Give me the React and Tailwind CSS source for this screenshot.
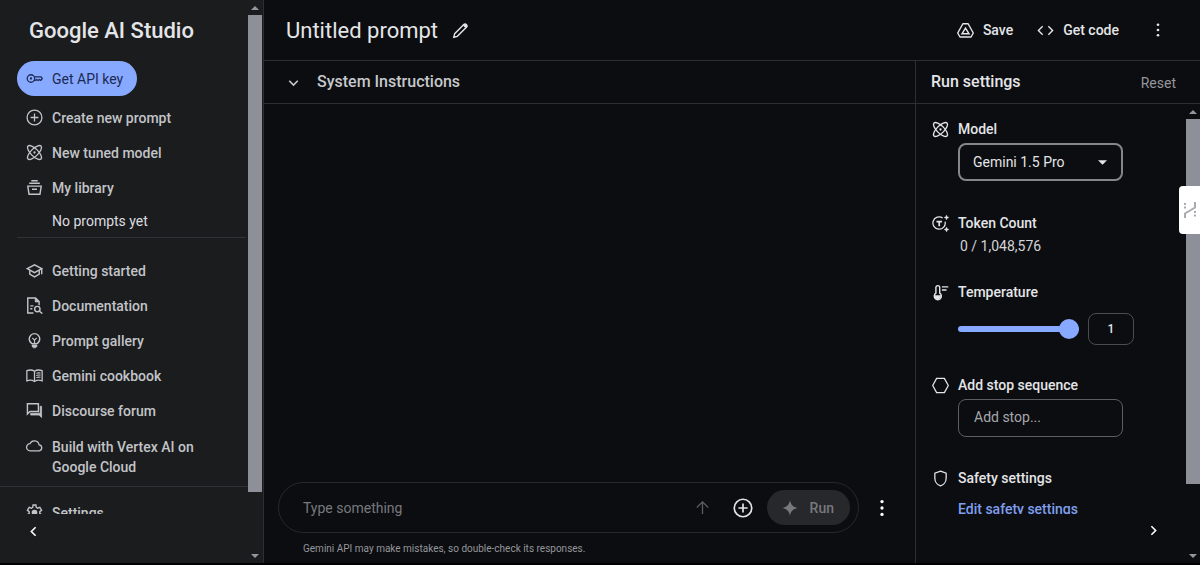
import React, { useState } from "react";

function Icon({ children, className = "size-[17px]", viewBox = "0 0 24 24", strokeWidth = 1.8 }) {
  return (
    <svg
      className={`${className} shrink-0`}
      viewBox={viewBox}
      fill="none"
      stroke="currentColor"
      strokeWidth={strokeWidth}
      aria-hidden="true"
    >
      {children}
    </svg>
  );
}

const KeyIcon = () => (
  <Icon>
    <circle cx="7" cy="12" r="5.3" />
    <circle cx="7" cy="12" r="1.6" fill="currentColor" stroke="none" />
    <path d="M11.8 9.8H21.4L23 12l-2.2 2.6-1.9-1.2-1.8 1.3-1.8-1.3-1.6 1.2h-2.3" />
  </Icon>
);

const PlusCircleIcon = ({ className, strokeWidth }) => (
  <Icon className={className} strokeWidth={strokeWidth}>
    <circle cx="12" cy="12" r="10.5" />
    <path d="M12 6.500v11M6.500 12h11" />
  </Icon>
);

const AtomIcon = () => (
  <Icon strokeWidth={1.900}>
    <ellipse cx="12" cy="12" rx="13" ry="5.200" transform="rotate(45 12 12)" />
    <ellipse cx="12" cy="12" rx="13" ry="5.200" transform="rotate(-45 12 12)" />
    <circle cx="12" cy="12" r="1.600" fill="currentColor" stroke="none" />
  </Icon>
);

const LibraryIcon = () => (
  <Icon strokeWidth={2}>
    <path d="M7.500 2.500h9M4.500 6h15M2.500 10h19l-1.800 11.500H4.300zM8.500 14.500h7" />
  </Icon>
);

const SchoolIcon = () => (
  <Icon strokeWidth={2}>
    <path d="M1.800 9.500 12 4l10.200 5.500L12 15z" />
    <path d="M5.300 11.500v5.700L12 21l6.700-3.800v-5.700M22.200 9.500v7.800" />
  </Icon>
);

const DocSearchIcon = () => (
  <Icon strokeWidth={2}>
    <path d="M10.500 22.500H2.500V1.500h11l5 5v5" />
    <path d="M13 1.500V7h5.500z" fill="currentColor" strokeWidth="1" />
    <path d="M6 12.500h4.500M6 16.500h3" />
    <circle cx="16" cy="17" r="3.800" />
    <path d="m18.700 19.700 4.300 3.800" />
  </Icon>
);

const BulbIcon = () => (
  <Icon strokeWidth={2}>
    <path d="M8.500 16.500c-2.300-1.300-3.900-3.600-3.900-6.800a7.400 7.400 0 0 1 14.800 0c0 3.200-1.600 5.500-3.900 6.800z" />
    <path d="M12 16v-4.500L9 8.500M12 11.500l3-3" strokeWidth="1.600" />
    <path d="M8.500 18.500h7v1.800l-2 2h-3l-2-2z" fill="currentColor" strokeWidth="1" />
  </Icon>
);

const BookIcon = () => (
  <Icon>
    <path d="M12 6C9 4 4.500 4 1.200 5.200v14.300C4.500 18.300 9 18.500 12 20.500c3-2 7.500-2.200 10.800-1V5.200C19.500 4 15 4 12 6z" />
    <path d="M12 6v14.500" />
    <path d="M14.500 9c2-.9 4-.9 6-.5M14.500 12c2-.9 4-.9 6-.5M14.500 15c2-.9 4-.9 6-.5" strokeWidth="1.500" />
  </Icon>
);

const ForumIcon = () => (
  <Icon strokeWidth={2}>
    <path d="M2 2.500h15.500v11H5.500L2 17z" />
    <path d="M22 6v16L18.500 18.500H6.500v-2.500H20V6z" fill="currentColor" strokeWidth="1" />
  </Icon>
);

const CloudIcon = () => (
  <Icon>
    <path d="M6 19.500a5 5 0 0 1-.4-10A6.700 6.700 0 0 1 18.400 11a4.300 4.300 0 0 1 .3 8.500z" />
  </Icon>
);

const GearIcon = () => (
  <Icon strokeWidth={2}>
    <path d="m10 1.500-.5 3.300-2 1.200-3-1.200-2.500 4 2.500 2v2.400l-2.500 2 2.500 4 3-1.200 2 1.200.5 3.300h4l.5-3.300 2-1.200 3 1.200 2.500-4-2.500-2v-2.400l2.500-2-2.500-4-3 1.200-2-1.200-.5-3.300z" />
    <circle cx="12" cy="12" r="4" fill="currentColor" stroke="none" />
  </Icon>
);

const ChevronIcon = ({ d }) => (
  <Icon strokeWidth={2.300}>
    <path d={d} />
  </Icon>
);

const PencilIcon = () => (
  <Icon strokeWidth={1.900}>
    <path d="m2.500 21.500 1.300-5L17 3.300c.9-.9 2-.9 2.800 0l.9.900c.9.900.9 1.900 0 2.800L7.500 20.200z" />
    <path d="m15.500 5 3-3 3.500 3.500-3 3z" fill="currentColor" stroke="none" />
  </Icon>
);

const DriveIcon = () => (
  <Icon strokeWidth={2}>
    <path d="M8.300 2.500h7.400L23 15.500l-3.200 5.700H4.200L1 15.500z" strokeLinejoin="round" />
    <path d="M12 8.500 7 16.700h10z" />
  </Icon>
);

const CodeIcon = () => (
  <Icon strokeWidth={2}>
    <path d="M8 6 2 12l6 6M16 6l6 6-6 6" />
  </Icon>
);

const MoreIcon = ({ className = "size-[18px]" }) => (
  <Icon className={className}>
    <g fill="currentColor" stroke="none">
      <circle cx="12" cy="5" r="1.800" />
      <circle cx="12" cy="12" r="1.800" />
      <circle cx="12" cy="19" r="1.800" />
    </g>
  </Icon>
);

const TokenIcon = () => (
  <Icon viewBox="0 0 24 24" strokeWidth={1.800}>
    <path d="M15 4.200A8.700 8.700 0 1 0 18.500 9.500" />
    <path d="M6.300 9.300h7.800M10.200 9.300v6.700" strokeWidth="2.400" />
    <path d="m20.500 0 1 2.500 2.500 1-2.500 1-1 2.500-1-2.500-2.500-1 2.500-1zM20.500 17l1 2.500 2.500 1-2.500 1-1 2.500-1-2.500-2.500-1 2.500-1z" fill="currentColor" strokeWidth="0.500" />
  </Icon>
);

const ThermometerIcon = () => (
  <Icon strokeWidth={2}>
    <path d="M5.500 13V5a2.700 2.700 0 0 1 5.400 0v8a5 5 0 1 1-5.400 0z" />
    <path d="M3.600 16h9.200a5 5 0 0 1-9.200 3z" fill="currentColor" stroke="none" />
    <path d="M14 4h9M14 8.500h6.500" />
  </Icon>
);

const HexagonIcon = () => (
  <Icon>
    <path d="M6.500 2h11L23 12l-5.500 10h-11L1 12z" />
  </Icon>
);

const ShieldIcon = () => (
  <Icon>
    <path d="m12 1.500 8 3v6.700c0 5-3.300 9.800-8 11.300-4.700-1.500-8-6.300-8-11.300V4.500z" />
  </Icon>
);

function NavLink({ icon, children }) {
  return (
    <a
      href="#"
      className="flex h-[35px] items-center gap-[9px] px-[9px] text-sm font-medium text-[#c2c4c8]"
    >
      {icon}
      {children}
    </a>
  );
}

function Scrollbar({ thumb }) {
  return (
    <div className="flex w-[14px] shrink-0 flex-col items-center" aria-hidden="true">
      <svg className="h-[15px] w-2 shrink-0 text-[#95979f]" viewBox="0 0 8 15" fill="currentColor">
        <path d="M0 10h8L4 6z" />
      </svg>
      <div className="flex w-[14px] flex-1 flex-col">
        <div className={`${thumb} bg-[#8d8f99]`} />
      </div>
      <svg className="h-[15px] w-2 shrink-0 text-[#95979f]" viewBox="0 0 8 15" fill="currentColor">
        <path d="M0 6h8l-4 4z" />
      </svg>
    </div>
  );
}

function Sidebar() {
  return (
    <aside className="flex w-[264px] shrink-0 border-r border-[#2c2e32] bg-[#1b1c1e] pr-px">
      <div className="flex min-w-0 flex-1 flex-col">
        <div className="min-h-0 flex-1 overflow-hidden">
          <h1 className="flex h-[61px] items-center pl-[29px] text-[22px] font-medium text-[#e4e5e8]">
            Google AI Studio
          </h1>
          <nav>
            <div className="pl-[17px]">
              <button className="flex h-[35px] items-center gap-[9px] rounded-full bg-[#87a9ff] pr-3.5 pl-[9px] text-sm text-[#1c2a52]">
                <KeyIcon />
                Get API key
              </button>
              <div className="pt-1">
                <NavLink icon={<PlusCircleIcon />}>Create new prompt</NavLink>
                <NavLink icon={<AtomIcon />}>New tuned model</NavLink>
                <NavLink icon={<LibraryIcon />}>My library</NavLink>
              </div>
              <p className="mr-[2px] border-b border-[#303236] pt-0.5 pb-0.5 pl-[35px] text-sm leading-7 text-[#dcdde0]">
                No prompts yet
              </p>
              <div className="pt-[15px]">
                <NavLink icon={<SchoolIcon />}>Getting started</NavLink>
                <NavLink icon={<DocSearchIcon />}>Documentation</NavLink>
                <NavLink icon={<BulbIcon />}>Prompt gallery</NavLink>
                <NavLink icon={<BookIcon />}>Gemini cookbook</NavLink>
                <NavLink icon={<ForumIcon />}>Discourse forum</NavLink>
                <a
                  href="#"
                  className="flex items-start gap-[9px] px-[9px] pt-[9px] pb-[9px] text-sm leading-5 font-medium text-[#c2c4c8]"
                >
                  <CloudIcon />
                  <span className="max-w-[160px]">Build with Vertex AI on Google Cloud</span>
                </a>
              </div>
            </div>
            <div className="border-t border-[#303236] pt-2 pl-[17px]">
              <NavLink icon={<GearIcon />}>Settings</NavLink>
            </div>
          </nav>
        </div>
        <div className="h-[49px] shrink-0 pt-[9px] pl-[25px]">
          <button className="block text-white" aria-label="Collapse navigation">
            <ChevronIcon d="m15 6-6 6 6 6" />
          </button>
        </div>
      </div>
      <Scrollbar thumb="h-17/19" />
    </aside>
  );
}

function TopBar() {
  return (
    <header className="flex h-[61px] shrink-0 items-center border-b border-[#2c2e32] pr-[33px] pl-[22px] text-[#e4e5e8]">
      <h2 className="text-[22px]">Untitled prompt</h2>
      <button className="ml-3.5" aria-label="Edit title">
        <PencilIcon />
      </button>
      <div className="ml-auto flex items-center text-sm font-medium">
        <button className="flex items-center gap-[9px]">
          <DriveIcon />
          Save
        </button>
        <button className="ml-6 flex items-center gap-[9px]">
          <CodeIcon />
          Get code
        </button>
        <button className="ml-[30px]" aria-label="More options">
          <MoreIcon />
        </button>
      </div>
    </header>
  );
}

function PromptArea() {
  return (
    <main className="flex min-w-0 flex-1 flex-col">
      <button className="flex h-[43px] shrink-0 items-center gap-[15px] border-b border-[#2c2e32] pl-[21px] text-base font-medium text-[#c6c8cc]">
        <ChevronIcon d="m6 9.500 6 6 6-6" />
        System Instructions
      </button>
      <div className="flex-1" />
      <form className="px-[14px] pb-1.5" onSubmit={(e) => e.preventDefault()}>
        <div className="flex items-center gap-3 pr-2">
          <div className="flex h-[51px] flex-1 items-center rounded-full border border-[#26282c] pr-2 pl-6">
            <input
              className="min-w-0 flex-1 bg-transparent text-sm text-[#dcdde0] outline-none placeholder:text-[#77797e]"
              placeholder="Type something"
              aria-label="Prompt"
            />
            <button type="button" className="text-[#5c5e63]" aria-label="Insert">
              <Icon strokeWidth={1.800}>
                <path d="M12 21V4M4 12l8-8 8 8" />
              </Icon>
            </button>
            <button type="button" className="ml-[22px] text-[#e4e5e8]" aria-label="Add media">
              <PlusCircleIcon className="size-5" strokeWidth={2} />
            </button>
            <button className="ml-3.5 flex h-[35px] items-center gap-3 rounded-full bg-[#27282b] pr-4 pl-[15px] text-sm font-medium text-[#77797e]">
              <svg className="size-4" viewBox="0 0 24 24" fill="currentColor" aria-hidden="true">
                <path d="M12 0c1 7 5 11 12 12-7 1-11 5-12 12-1-7-5-11-12-12C7 11 11 7 12 0z" />
              </svg>
              Run
            </button>
          </div>
          <button type="button" className="text-white" aria-label="More prompt options">
            <MoreIcon className="size-[22px]" />
          </button>
        </div>
        <p className="mt-2 pl-[25px] text-[10px] leading-4 text-[#94969b]">
          Gemini API may make mistakes, so double-check its responses.
        </p>
      </form>
    </main>
  );
}

function Setting({ icon, label, htmlFor, children }) {
  return (
    <section className="grid grid-cols-[17px_1fr] gap-x-[9px] text-[#e4e5e8]">
      <div className="flex h-5 items-center">{icon}</div>
      <label htmlFor={htmlFor} className="text-sm leading-5 font-medium">
        {label}
      </label>
      <div className="col-start-2">{children}</div>
    </section>
  );
}

function RunSettings() {
  const [temperature, setTemperature] = useState(1);
  return (
    <aside className="flex w-[285px] shrink-0 flex-col border-l border-[#2c2e32]">
      <div className="flex h-[43px] shrink-0 items-center justify-between border-b border-[#2c2e32] pr-6 pl-[15px]">
        <h3 className="text-base font-medium text-[#e4e5e8]">Run settings</h3>
        <button className="pt-0.5 text-sm text-[#94969b]">Reset</button>
      </div>
      <div className="flex min-h-0 flex-1">
        <div className="flex min-w-0 flex-1 flex-col">
          <div className="flex min-h-0 flex-1 flex-col overflow-hidden pt-[15px] pl-4">
            <Setting icon={<AtomIcon />} label="Model" htmlFor="model">
              <div className="mt-1 grid w-[165px] items-center">
                <select
                  id="model"
                  className="col-start-1 row-start-1 h-[38px] appearance-none rounded-lg border-2 border-[#84868c] bg-[#0c0d10] pl-[13px] text-sm"
                >
                  <option>Gemini 1.5 Pro</option>
                </select>
                <svg
                  className="pointer-events-none col-start-1 row-start-1 mr-4 h-[5px] w-[9px] justify-self-end"
                  viewBox="0 0 10 5"
                  fill="currentColor"
                  aria-hidden="true"
                >
                  <path d="M0 0h10L5 5z" />
                </svg>
              </div>
            </Setting>
            <div className="mt-8 shrink-0">
              <Setting icon={<TokenIcon />} label="Token Count" htmlFor="tokens">
                <output id="tokens" className="mt-[3px] block pl-0.5 text-sm leading-5 text-[#d3d4d8]">
                  0 / 1,048,576
                </output>
              </Setting>
            </div>
            <div className="mt-[26px] shrink-0">
              <Setting icon={<ThermometerIcon />} label="Temperature" htmlFor="temperature">
                <div className="mt-[11px] flex items-center gap-[9px]">
                  <input
                    id="temperature"
                    type="range"
                    min="0"
                    max="1"
                    step="0.05"
                    value={temperature}
                    onChange={(e) => setTemperature(Number(e.target.value))}
                    className="h-1.5 w-[121px] appearance-none rounded-full bg-[#87a9ff] [&::-webkit-slider-thumb]:size-5 [&::-webkit-slider-thumb]:appearance-none [&::-webkit-slider-thumb]:rounded-full [&::-webkit-slider-thumb]:bg-[#87a9ff]"
                  />
                  <input
                    type="text"
                    aria-label="Temperature value"
                    value={temperature}
                    onChange={(e) => setTemperature(Number(e.target.value) || 0)}
                    className="h-8 w-[46px] rounded-lg border border-[#4a4c51] bg-transparent text-center text-xs font-medium"
                  />
                </div>
              </Setting>
            </div>
            <div className="mt-[30px] shrink-0">
              <Setting icon={<HexagonIcon />} label="Add stop sequence" htmlFor="stop">
                <input
                  id="stop"
                  placeholder="Add stop..."
                  className="mt-1 block h-[38px] w-[165px] rounded-lg border border-[#5c5e63] bg-transparent pb-0.5 pl-[15px] text-sm placeholder:text-[#a6a8ad]"
                />
              </Setting>
            </div>
            <div className="mt-[31px] shrink-0">
              <Setting icon={<ShieldIcon />} label="Safety settings" htmlFor="safety">
                <button id="safety" className="mt-[11px] block text-sm leading-5 font-medium text-[#7f9fee]">
                  Edit safety settings
                </button>
              </Setting>
            </div>
          </div>
          <div className="flex h-[49px] shrink-0 justify-end pt-2 pr-6">
            <button className="self-start text-white" aria-label="Collapse settings">
              <ChevronIcon d="m9 6 6 6-6 6" />
            </button>
          </div>
        </div>
        <Scrollbar thumb="h-17/20" />
      </div>
    </aside>
  );
}

function SideTab() {
  return (
    <button
      aria-label="Open extension"
      className="absolute top-[186px] right-0 flex h-12 w-[21px] items-center justify-center rounded-l bg-white text-[#a9abb0]"
    >
      <svg className="h-4 w-3" viewBox="0 0 12 16" fill="none" stroke="currentColor" strokeWidth="2" aria-hidden="true">
        <path d="M1 1v7M11 9v7" strokeDasharray="2 1.500" />
        <path d="M1 16v-4.500L11 5.500V0" />
      </svg>
    </button>
  );
}

export default function App() {
  return (
    <div className="relative flex h-screen border-b-2 border-black bg-[#0c0d10] font-['Roboto','Liberation_Sans',sans-serif]">
      <Sidebar />
      <div className="flex min-w-0 flex-1 flex-col">
        <TopBar />
        <div className="flex min-h-0 flex-1">
          <PromptArea />
          <RunSettings />
        </div>
      </div>
      <SideTab />
    </div>
  );
}
